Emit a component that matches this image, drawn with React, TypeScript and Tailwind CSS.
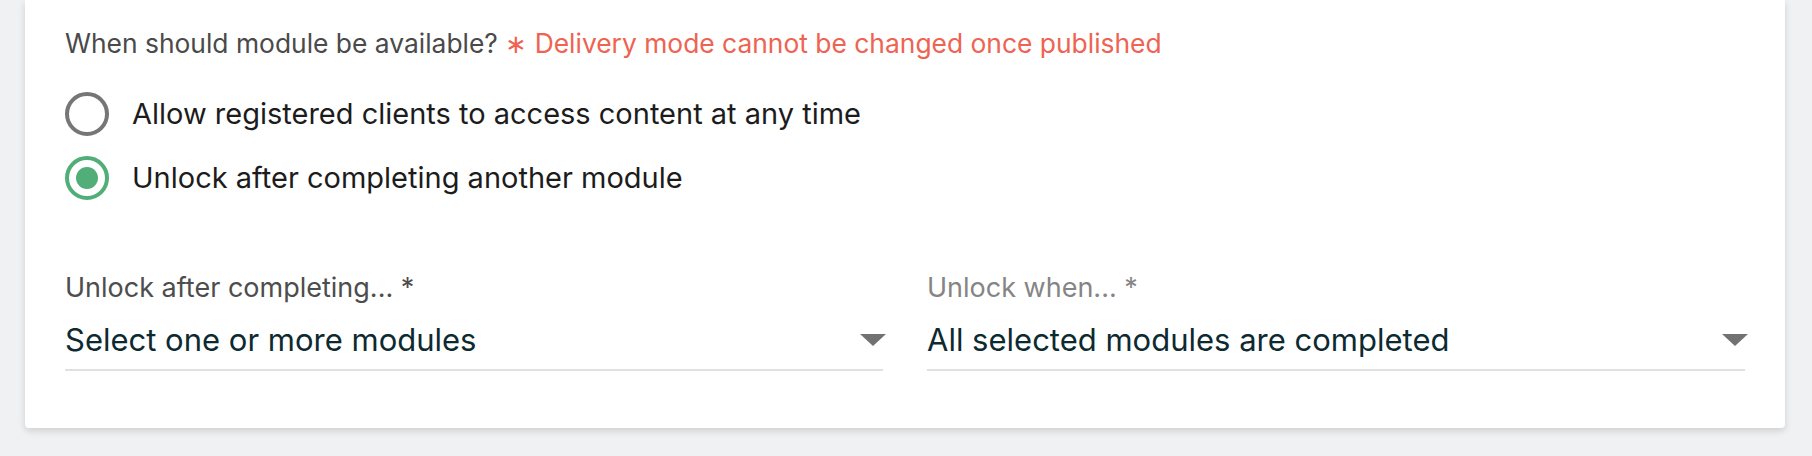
import React from "react";

function Radio({ checked, label }: { checked?: boolean; label: string }) {
  return (
    <label className="flex items-center gap-[23px] h-[44px] cursor-pointer">
      <span
        className={`w-[44px] h-[44px] rounded-full border-[4px] flex items-center justify-center flex-shrink-0 ${
          checked ? "border-[#52ae78]" : "border-[#767676]"
        }`}
      >
        {checked && <span className="w-[22px] h-[22px] rounded-full bg-[#52ae78]" />}
      </span>
      <span className="text-[29px] leading-[36px] text-[#1c1c1c]">{label}</span>
    </label>
  );
}

function SelectField({
  label,
  value,
  muted,
}: {
  label: string;
  value: string;
  muted?: boolean;
}) {
  return (
    <div className="flex flex-col">
      <span
        className={`text-[27px] leading-[32px] ${muted ? "text-[#858585]" : "text-[#4d4d4d]"}`}
      >
        {label}
      </span>
      <div className="mt-[18px] flex items-center justify-between pb-[11px] border-b-2 border-[#e0e0e0]">
        <span className="text-[31px] leading-[36px] text-[#0d2a31]">{value}</span>
        <svg width="26" height="12" viewBox="0 0 26 12" className="mr-[-3px]">
          <path d="M0 0 L26 0 L13 12 Z" fill="#727272" />
        </svg>
      </div>
    </div>
  );
}

export default function App() {
  return (
    <div
      className="w-[1812px] h-[456px] bg-[#f0f1f3] pl-[25px] pr-[27px] overflow-hidden"
      style={{ fontFamily: "Inter, 'Noto Sans', sans-serif" }}
    >
      <div className="bg-white rounded-b-[4px] shadow-[0_3px_7px_rgba(0,0,0,0.14)] px-[40px] pt-[27px] pb-[57px]">
        {/* Availability */}
        <p className="text-[26.4px] leading-[32px] text-[#4a4a4a]">
          When should module be available?{" "}
          <span className="text-[#ee6352]">∗ Delivery mode cannot be changed once published</span>
        </p>

        <div className="mt-[33px] flex flex-col gap-[20px]">
          <Radio label="Allow registered clients to access content at any time" />
          <Radio checked label="Unlock after completing another module" />
        </div>

        {/* Unlock conditions */}
        <div className="mt-[72px] grid grid-cols-2 gap-[44px]">
          <SelectField label="Unlock after completing... *" value="Select one or more modules" />
          <SelectField muted label="Unlock when... *" value="All selected modules are completed" />
        </div>
      </div>
    </div>
  );
}
